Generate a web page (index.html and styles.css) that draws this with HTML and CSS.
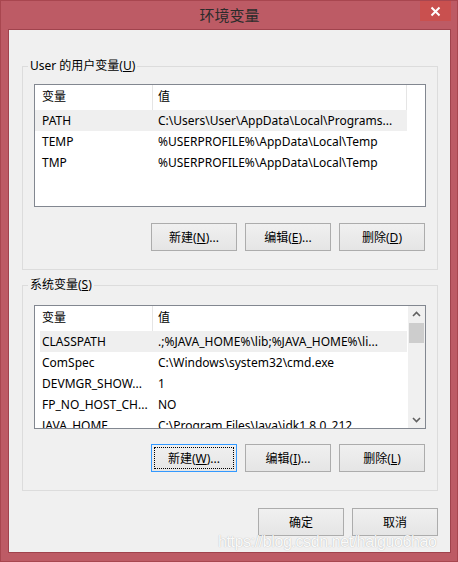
FILE: index.html
```html
<!DOCTYPE html>
<html lang="zh-CN">
<head>
    <meta charset="UTF-8">
    <title>环境变量</title>
    <link rel="stylesheet" href="styles.css">
</head>
<body>
    <div class="window">
        <div class="titlebar">
            <span></span>
            <div class="title">环境变量</div>
            <button class="close" aria-label="关闭">
                <svg width="11" height="11" viewBox="0 0 11 11">
                    <path d="M1.5 1.5 L9.5 9.5 M9.5 1.5 L1.5 9.5" stroke="#fff" stroke-width="2" fill="none"/>
                </svg>
            </button>
        </div>

        <div class="client">
            <fieldset class="group">
                <legend>User 的用户变量(<u>U</u>)</legend>
                <div class="list">
                    <div class="table">
                        <div class="row head"><span>变量</span><span>值</span><span></span></div>
                        <div class="row sel"><span>PATH</span><span>C:\Users\User\AppData\Local\Programs...</span><span></span></div>
                        <div class="row"><span>TEMP</span><span>%USERPROFILE%\AppData\Local\Temp</span><span></span></div>
                        <div class="row"><span>TMP</span><span>%USERPROFILE%\AppData\Local\Temp</span><span></span></div>
                    </div>
                </div>
                <div class="actions">
                    <button class="btn">新建(<u>N</u>)...</button>
                    <button class="btn">编辑(<u>E</u>)...</button>
                    <button class="btn">删除(<u>D</u>)</button>
                </div>
            </fieldset>

            <fieldset class="group second">
                <legend>系统变量(<u>S</u>)</legend>
                <div class="list tall">
                    <div class="table">
                        <div class="row head"><span>变量</span><span>值</span></div>
                        <div class="row sel inset"><span>CLASSPATH</span><span>.;%JAVA_HOME%\lib;%JAVA_HOME%\li...</span></div>
                        <div class="row"><span>ComSpec</span><span>C:\Windows\system32\cmd.exe</span></div>
                        <div class="row"><span>DEVMGR_SHOW...</span><span>1</span></div>
                        <div class="row"><span>FP_NO_HOST_CH...</span><span>NO</span></div>
                        <div class="row"><span>JAVA_HOME</span><span>C:\Program Files\Java\jdk1.8.0_212</span></div>
                    </div>
                    <div class="vscroll">
                        <svg class="arrow" width="17" height="17" viewBox="0 0 17 17">
                            <path d="M5 10 L8.5 6.5 L12 10" stroke="#606060" stroke-width="1.6" fill="none"/>
                        </svg>
                        <div class="thumb"></div>
                        <div class="track"></div>
                        <svg class="arrow" width="17" height="17" viewBox="0 0 17 17">
                            <path d="M5 7 L8.5 10.5 L12 7" stroke="#606060" stroke-width="1.6" fill="none"/>
                        </svg>
                    </div>
                </div>
                <div class="actions">
                    <button class="btn focus">新建(<u>W</u>)...</button>
                    <button class="btn">编辑(<u>I</u>)...</button>
                    <button class="btn">删除(<u>L</u>)</button>
                </div>
            </fieldset>

            <div class="footer">
                <button class="btn">确定</button>
                <button class="btn">取消</button>
            </div>
        </div>

        <div class="watermark">https://blog.csdn.net/haiguo6hao</div>
    </div>
</body>
</html>
```

FILE: styles.css
```css
body {
    margin: 0;
    width: 458px;
    height: 562px;
    overflow: hidden;
    font-family: "Noto Sans", "Noto Sans CJK SC", sans-serif;
    font-size: 12px;
    color: #000;
}
.window {
    position: relative;
    box-sizing: border-box;
    width: 458px;
    height: 562px;
    background: #bd5b65;
    border: 1px solid #a8464f;
    padding: 0 6px 8px 7px;
    display: flex;
    flex-direction: column;
}
.titlebar {
    height: 28px;
    display: grid;
    grid-template-columns: 1fr auto 1fr;
    align-items: start;
}
.title {
    font-family: "Noto Sans CJK SC", sans-serif;
    font-size: 15px;
    line-height: 28px;
    color: #2b2b2b;
}
.close {
    justify-self: end;
    width: 31px;
    height: 20px;
    border: none;
    padding: 0;
    background: #c9504f;
    display: flex;
    align-items: center;
    justify-content: center;
}
.client {
    flex: 1;
    background: #f0f0f0;
    border: 1px solid #a0434d;
    padding: 28px 12px 0 13px;
}

/* group boxes */
.group {
    margin: 0;
    padding: 10px 11px 18px 11px;
    border: 1px solid #dcdcdc;
    min-width: 0;
}
.group.second {
    margin-top: 7px;
    padding-top: 12px;
}
legend {
    line-height: 16px;
    padding: 0 2px;
    margin-left: -6px;
}

/* list views */
.list {
    height: 123px;
    box-sizing: border-box;
    border: 1px solid #828790;
    background: #fff;
    display: flex;
    overflow: hidden;
}
.list.tall {
    height: 124px;
}
.table {
    flex: 1;
    min-width: 0;
}
.row {
    display: grid;
    grid-template-columns: 118px 254px 1fr;
    height: 21px;
    line-height: 21px;
}
.row span {
    white-space: nowrap;
    overflow: hidden;
}
.row span:first-child {
    padding-left: 7px;
}
.row span:nth-child(2) {
    padding-left: 5px;
}
.row.head {
    height: 25px;
    line-height: 24px;
}
.row.head span {
    border-right: 1px solid #e5e5e5;
}
.row.head span:last-child {
    border-right: none;
}
.row.sel span:first-child,
.row.sel span:nth-child(2) {
    background: #efefef;
}
.row.sel.inset span:first-child {
    background: linear-gradient(to right, #fff 5px, #efefef 5px);
}

.vscroll {
    width: 17px;
    background: #f0f0f0;
    display: flex;
    flex-direction: column;
}
.arrow {
    display: block;
}
.thumb {
    height: 20px;
    margin: 0 1px;
    background: #cdcdcd;
}
.track {
    flex: 1;
}

/* buttons */
.actions,
.footer {
    display: flex;
    justify-content: flex-end;
    gap: 8px;
}
.actions {
    margin-top: 16px;
    margin-right: 1px;
}
.second .actions {
    margin-top: 15px;
}
.footer {
    margin-top: 17px;
}
.btn {
    width: 86px;
    height: 28px;
    padding: 0;
    border: 1px solid #acacac;
    background: linear-gradient(#f0f0f0, #e5e5e5);
    font-family: inherit;
    font-size: 12px;
    color: #000;
}
.btn.focus {
    border-color: #3399ff;
    outline: 1px dotted #000;
    outline-offset: -4px;
}

.watermark {
    position: absolute;
    left: 217px;
    top: 532px;
    font-family: "Liberation Sans", Arial, sans-serif;
    font-size: 16px;
    letter-spacing: -0.4px;
    color: rgba(255, 255, 255, 0.95);
    text-shadow: 0 0 1px rgba(0, 0, 0, 0.3);
    white-space: nowrap;
}
```
